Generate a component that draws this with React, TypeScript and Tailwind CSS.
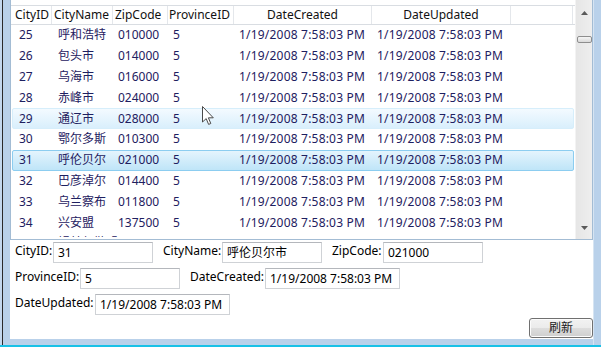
import React from "react";

const rows: [string, string, string][] = [
  ["25", "呼和浩特", "010000"],
  ["26", "包头市", "014000"],
  ["27", "乌海市", "016000"],
  ["28", "赤峰市", "024000"],
  ["29", "通辽市", "028000"],
  ["30", "鄂尔多斯", "010300"],
  ["31", "呼伦贝尔", "021000"],
  ["32", "巴彦淖尔", "014400"],
  ["33", "乌兰察布", "011800"],
  ["34", "兴安盟", "137500"],
  ["35", "锡林郭勒盟", "026000"],
];

const DATE = "1/19/2008 7:58:03 PM";

function Field({
  label,
  labelW,
  boxW,
  value,
  first,
}: {
  label: string;
  labelW: string;
  boxW: string;
  value: string;
  first?: boolean;
}) {
  return (
    <div className={`flex items-start ${first ? "" : "ml-[10px]"}`}>
      <div className={`${labelW} h-[21px] leading-[17px] text-black whitespace-nowrap`}>{label}</div>
      <div
        className={`${boxW} h-[21px] border border-[#cfd2d6] border-t-[#b4b7bc] bg-white pl-[4px] leading-[20px] text-black whitespace-nowrap overflow-hidden`}
      >
        {value}
      </div>
    </div>
  );
}

export default function App() {
  return (
    <div className="relative w-[601px] h-[347px] overflow-hidden bg-white font-['Noto_Sans','Noto_Sans_CJK_SC',sans-serif] text-[12px] leading-none">
      <div className="flex h-[345px]">
        {/* left frame */}
        <div className="flex w-[10px] shrink-0">
          <div className="w-[2px] bg-[#c4d8ee]" />
          <div className="w-[1px] bg-[#2a2a2a]" />
          <div className="flex-1 bg-[#b9d1ea]" />
        </div>

        {/* client */}
        <div className="flex w-[583px] shrink-0 flex-col">
          <div className="flex h-[339px] flex-col bg-white">
            {/* DataGrid */}
            <div className="flex h-[240px] shrink-0 border-x border-b border-[#a3bcd4]">
              <div className="flex w-[564px] flex-col overflow-hidden">
                <div className="h-[5px] shrink-0" />
                <div className="flex h-[20px] shrink-0 items-center border-y border-[#d9dde2] text-[#111]">
                  <div className="flex h-full w-[41px] items-center border-r border-[#e4e7eb] pl-[4px]">CityID</div>
                  <div className="flex h-full w-[61px] items-center border-r border-[#e4e7eb] pl-[2px]">CityName</div>
                  <div className="flex h-full w-[55px] items-center border-r border-[#e4e7eb] pl-[2px]">ZipCode</div>
                  <div className="flex h-full w-[66px] items-center border-r border-[#e4e7eb] pl-[1px]">ProvinceID</div>
                  <div className="flex h-full w-[138px] items-center justify-center border-r border-[#e4e7eb]">DateCreated</div>
                  <div className="flex h-full w-[139px] items-center justify-center border-r border-[#e4e7eb]">DateUpdated</div>
                  <div className="flex h-full w-[62px] border-r border-[#e4e7eb]" />
                </div>
                <div className="flex h-[212px] shrink-0 flex-col overflow-hidden">
                  {rows.map((r) => {
                    const hover = r[0] === "29";
                    const sel = r[0] === "31";
                    const cls = sel
                      ? "border-[#8ccdf0] bg-[linear-gradient(#e4f4fd,#bfe5f8)]"
                      : hover
                      ? "border-[#d6eefb] bg-[linear-gradient(#f3faff,#d9effc)]"
                      : "border-transparent";
                    return (
                      <div
                        key={r[0]}
                        className={`mx-[1px] flex h-[20.8px] shrink-0 items-center rounded-[2px] border text-[#1e2060] whitespace-nowrap ${cls}`}
                      >
                        <div className="w-[39px] pl-[6px]">{r[0]}</div>
                        <div className="w-[61px] pl-[6px]">{r[1]}</div>
                        <div className="w-[55px] pl-[5px]">{r[2]}</div>
                        <div className="w-[66px] pl-[5px]">5</div>
                        <div className="w-[138px] pl-[5px] tracking-[0.2px]">{DATE}</div>
                        <div className="w-[139px] pl-[5px] tracking-[0.2px]">{DATE}</div>
                      </div>
                    );
                  })}
                </div>
              </div>
              {/* scrollbar */}
              <div className="flex w-[17px] flex-col items-center border-l border-[#f3f3f3] bg-[linear-gradient(90deg,#e6e6e6,#eeeeee)]">
                <svg className="mt-[11px]" width="7" height="4" viewBox="0 0 7 4">
                  <path d="M3.5 0 L7 4 L0 4 Z" fill="#5a5a5a" />
                </svg>
                <div className="mt-[21px] h-[7px] w-[15px] rounded-[2px] border border-[#8e8e8e] bg-[linear-gradient(#f6f6f6,#d9d9d9)]" />
                <div className="flex-1" />
                <svg className="mb-[9px]" width="7" height="4" viewBox="0 0 7 4">
                  <path d="M0 0 L7 0 L3.5 4 Z" fill="#5a5a5a" />
                </svg>
              </div>
            </div>

            {/* form */}
            <div className="flex flex-1 flex-col pl-[5px] pt-[2px]">
              <div className="flex">
                <Field first label="CityID:" labelW="w-[38px]" boxW="w-[100px]" value="31" />
                <Field label="CityName:" labelW="w-[59px]" boxW="w-[100px]" value="呼伦贝尔市" />
                <Field label="ZipCode:" labelW="w-[51px]" boxW="w-[100px]" value="021000" />
              </div>
              <div className="mt-[5px] flex">
                <Field first label="ProvinceID:" labelW="w-[65px]" boxW="w-[100px]" value="5" />
                <Field label="DateCreated:" labelW="w-[75px]" boxW="w-[135px]" value={DATE} />
              </div>
              <div className="mt-[5px] flex">
                <Field first label="DateUpdated:" labelW="w-[80px]" boxW="w-[135px]" value={DATE} />
              </div>
              <div className="flex-1" />
              <div className="mb-[1px] flex justify-end">
                <div className="flex h-[20px] w-[64px] items-center justify-center rounded-[3px] border border-[#707070] bg-[linear-gradient(#f2f2f2_0%,#ebebeb_50%,#dddddd_50%,#cfcfcf_100%)] text-[#1a1a1a] shadow-[inset_0_0_0_1px_#fcfcfc]">
                  刷新
                </div>
              </div>
            </div>
          </div>
          <div className="h-[6px] bg-[#b9d1ea]" />
        </div>

        {/* right frame */}
        <div className="w-[8px] shrink-0 border-l border-[#d6e4f2] bg-[#b9d1ea]" />
      </div>
      <div className="h-[2px] bg-[#19c1e6]" />

      {/* mouse cursor */}
      <svg className="absolute left-[202px] top-[106px]" width="13" height="20" viewBox="0 0 13 20">
        <path
          d="M0.5 0.5 L0.5 16 L4.2 12.6 L6.6 18.4 L8.8 17.5 L6.4 11.8 L11.3 11.8 Z"
          fill="#ffffff"
          stroke="#4a4a4a"
          strokeWidth="1"
          strokeLinejoin="round"
        />
      </svg>
    </div>
  );
}
